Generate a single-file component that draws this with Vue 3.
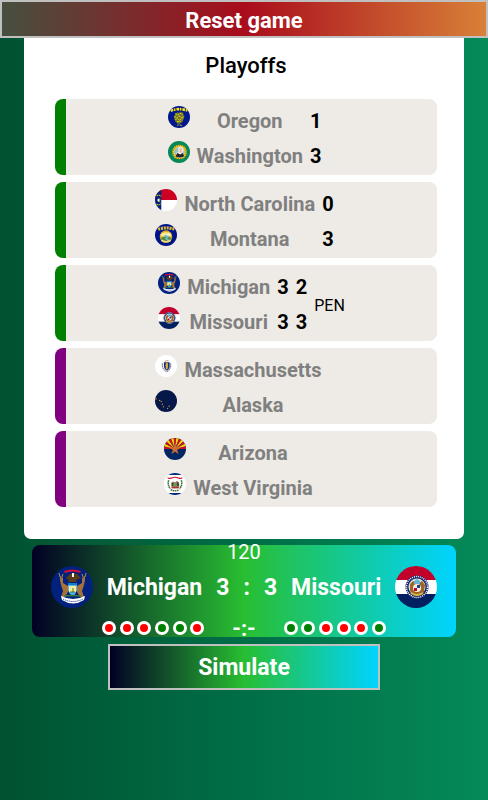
<template>
  <div class="page">
    <!-- flag drawings, used by id -->
    <svg class="flag-defs" aria-hidden="true">
      <symbol id="oregon" viewBox="0 0 42 42">
        <rect width="42" height="42" fill="#00188c" />
        <path d="M5 9 Q21 3 38 9" fill="none" stroke="#ffe600" stroke-width="5" stroke-dasharray="5 1.5 3 2" />
        <path d="M14 14l5-2 2 2 3-3 5 2 2 9-3 8-7 5-7-5-3-8z" fill="#6f7430" />
        <path d="M14 15l5 2 3-3 6 2M12 20l5 2 4-3 5 3 5-2M14 26l4-2 4 3 6-4M17 30l8-1" fill="none" stroke="#ffe600" stroke-width="1.5" stroke-dasharray="4 1" />
        <path d="M17 37h3M22 37h5M18 34l2 1M25 34l-1 1" stroke="#c9b832" stroke-width="1.5" />
      </symbol>
      <symbol id="washington" viewBox="0 0 42 42">
        <rect width="42" height="42" fill="#058757" />
        <circle cx="22" cy="21" r="14" fill="#f5c91a" />
        <circle cx="22" cy="21" r="12.5" fill="none" stroke="#2b2b12" stroke-width="1" stroke-dasharray="2 2" />
        <circle cx="22" cy="21" r="10" fill="#8fc4c9" />
        <path d="M14 29l2-6 4-2-1-8 4-3 6 3 1 6-3 4 4 7q-8 4-17-1" fill="#eee6e0" />
        <path d="M14 29l4-6 5 3 5-3 3 6q-8 5-17 0" fill="#26262c" />
        <path d="M22 14h4v8h-4z" fill="#e8b69b" />
      </symbol>
      <symbol id="carolina" viewBox="0 0 42 42">
        <rect width="42" height="21" fill="#cc0022" />
        <rect y="21" width="42" height="21" fill="#fff" />
        <rect width="12" height="42" fill="#00237b" />
        <path d="M4 21l3-3 2 3-2 4z" fill="#fff" />
        <path d="M3 13q5-3 9 1M3 29q5 3 8-1M9 18v7" stroke="#c9b532" stroke-width="2" fill="none" stroke-dasharray="3 1" />
      </symbol>
      <symbol id="montana" viewBox="0 0 42 42">
        <rect width="42" height="42" fill="#001489" />
        <path d="M6 10 Q21 5 38 10" fill="none" stroke="#d6b537" stroke-width="6" stroke-dasharray="4 1.5" />
        <circle cx="21" cy="24" r="12" fill="#d9a82d" />
        <path d="M10 20q11-9 22 0l-3 4H12z" fill="#f4e37b" />
        <path d="M12 22l5-4 4 3 5-4 5 5z" fill="#f8f1dc" />
        <path d="M11 27q10-6 20 0-3 8-10 8t-10-8" fill="#538c38" />
        <path d="M18 22l7 2-4 4 6 4" fill="none" stroke="#6bb9d9" stroke-width="3" />
        <path d="M12 31q9 6 18 0" fill="none" stroke="#f3df80" stroke-width="3" />
      </symbol>
      <symbol id="michigan" viewBox="0 0 42 42">
        <rect width="42" height="42" fill="#00217e" />
        <path d="M13 5q8-3 17 0l-1 2q-7-3-15 0z" fill="#d21034" />
        <path d="M15 12l4-4 3-1 4 1 4 4-5 2 1 2h-9l1-2z" fill="#5a3b18" />
        <path d="M21 7h2v4h-2z" fill="#fff" />
        <path d="M9 10l3 2v5l5 3 1 4-4 7h-4l2-6-2-6-1-5zM34 10l-3 2v5l-5 3-1 4 4 7h4l-2-6 2-6 1-5z" fill="#a5713b" />
        <path d="M9 11l-1-4M11 11l1-3M34 11l1-4M32 11l-1-3" stroke="#b98951" />
        <path d="M17 17h9v7q-1 4-4 6-4-2-5-6z" fill="#52b7e8" />
        <path d="M18 20h7v6h-7z" fill="#f7ec9d" />
        <path d="M19 26h5M22 22v4" stroke="#4b762c" stroke-width="1" />
        <path d="M17 18h9" stroke="#157ec4" stroke-width="2" />
        <path d="M13 30q8-1 17 0" stroke="#347b3c" stroke-width="1.5" fill="none" />
        <path d="M10 30q12 6 24 0l-1 4q-11 7-22 0z" fill="#fff" />
        <path d="M12 33q10 5 20 0" stroke="#00217e" fill="none" stroke-dasharray="1 1" />
      </symbol>
      <symbol id="missouri" viewBox="0 0 42 42">
        <rect width="42" height="14" fill="#c1002b" />
        <rect y="14" width="42" height="14" fill="#fff" />
        <rect y="28" width="42" height="14" fill="#00205f" />
        <circle cx="22" cy="21" r="11.5" fill="#10246b" />
        <circle cx="22" cy="21" r="10.5" fill="none" stroke="#fff" stroke-width="1.5" stroke-dasharray="1 1" />
        <circle cx="22" cy="21" r="8.5" fill="#e9e2d2" />
        <path d="M15 18l3-3 3 2h3l3-2 3 4-1 7-4 3h-6l-4-4z" fill="#9c662b" />
        <path d="M19 15l3-2 3 2v3h-6z" fill="#62b5d8" />
        <circle cx="22" cy="22" r="4" fill="#f8f0dc" />
        <path d="M19 22h3v3h-3z" fill="#c1002b" />
        <path d="M22 19h3v3h-3z" fill="#1d3e91" />
        <path d="M16 27q6 4 12 0" stroke="#d9b63a" stroke-width="2" fill="none" />
      </symbol>
      <symbol id="massachusetts" viewBox="0 0 42 42">
        <rect width="42" height="42" fill="#fff" />
        <path d="M17 14h11v9q-1 5-5 7-5-2-6-7z" fill="#112f7c" />
        <path d="M21 15h3l1 4-1 8h-3l-1-7z" fill="#e2aa38" />
        <path d="M20 11h6M18 13h3" stroke="#a88643" stroke-width="1.5" />
        <path d="M14 16v7l3 5 5 4 5-3 3-6v-7" fill="none" stroke="#26355c" stroke-width="1.5" stroke-dasharray="3 1" />
      </symbol>
      <symbol id="alaska" viewBox="0 0 42 42">
        <rect width="42" height="42" fill="#06184a" />
        <g fill="#f0b323">
          <circle cx="2" cy="17" r="1.3" />
          <circle cx="9" cy="20" r="1.2" />
          <circle cx="12" cy="22" r="1.2" />
          <circle cx="14" cy="27" r="1.2" />
          <circle cx="16" cy="32" r="1.2" />
          <circle cx="24" cy="35" r="1.2" />
          <circle cx="27" cy="31" r="1.2" />
        </g>
      </symbol>
      <symbol id="arizona" viewBox="0 0 42 42">
        <rect width="42" height="42" fill="#002664" />
        <polygon v-for="(ray, i) in rays" :key="i" :points="ray" :fill="i % 2 ? '#fed700' : '#c8102e'" />
        <path d="M21 11l3 7h8l-7 5 3 8-7-5-7 5 3-8-7-5h8z" fill="#ce6c32" />
      </symbol>
      <symbol id="virginia" viewBox="0 0 42 42">
        <rect width="42" height="42" fill="#fff" />
        <path d="M0 0h42v4H0zM0 38h42v4H0z" fill="#002b7f" />
        <path d="M7 9q3 3 7 0M28 9q4 3 7 0M14 10q7-4 14 0" fill="none" stroke="#c8102e" stroke-width="2" />
        <path d="M9 14q-3 8 3 16M33 14q3 8-3 16" fill="none" stroke="#3a7a35" stroke-width="3" stroke-dasharray="3 1" />
        <path d="M13 32q8 4 16 0" fill="none" stroke="#4a7030" stroke-width="3" stroke-dasharray="3 1" />
        <path d="M14 18l4-2 3 2 4-3 4 4v8l-4 2h-8l-3-3z" fill="#90785b" />
        <path d="M15 19h3v6h-3zM25 18h3v7h-3z" fill="#423c38" />
        <path d="M18 20h6v5h-6z" fill="#6da148" />
        <path d="M14 28h15" stroke="#c8102e" stroke-width="2" />
      </symbol>
    </svg>

    <button type="button" class="reset-btn">Reset game</button>

    <section class="playoffs">
      <h1>Playoffs</h1>
      <div v-for="(match, i) in matches" :key="i" class="match" :class="match.played ? 'played' : 'upcoming'">
        <table>
          <tbody>
            <tr v-for="(team, j) in match.teams" :key="team.name">
              <td class="flag-cell">
                <svg class="flag" aria-hidden="true"><use :href="'#' + team.flag" /></svg>
              </td>
              <td class="team">{{ team.name }}</td>
              <td class="score">{{ team.score }}</td>
              <td>{{ team.pen }}</td>
              <td v-if="j === 0" rowspan="2" class="pen-label">{{ match.pen ? 'PEN' : '' }}</td>
            </tr>
          </tbody>
        </table>
      </div>
    </section>

    <section class="scoreboard">
      <div class="minute">120</div>
      <div class="result">
        <svg class="flag big" aria-hidden="true"><use href="#michigan" /></svg>
        <span>Michigan</span>
        <span>3</span>
        <span>:</span>
        <span>3</span>
        <span>Missouri</span>
        <svg class="flag big" aria-hidden="true"><use href="#missouri" /></svg>
      </div>
      <div class="penalties">
        <div class="shots">
          <span v-for="(goal, i) in homeShots" :key="i" class="shot" :class="{ goal }"></span>
        </div>
        <span>-:-</span>
        <div class="shots">
          <span v-for="(goal, i) in awayShots" :key="i" class="shot" :class="{ goal }"></span>
        </div>
      </div>
    </section>

    <button type="button" class="simulate-btn">Simulate</button>
  </div>
</template>

<script setup>
import { ref } from 'vue'

const matches = ref([
  {
    played: true,
    teams: [
      { name: 'Oregon', flag: 'oregon', score: 1 },
      { name: 'Washington', flag: 'washington', score: 3 }
    ]
  },
  {
    played: true,
    teams: [
      { name: 'North Carolina', flag: 'carolina', score: 0 },
      { name: 'Montana', flag: 'montana', score: 3 }
    ]
  },
  {
    played: true,
    pen: true,
    teams: [
      { name: 'Michigan', flag: 'michigan', score: 3, pen: 2 },
      { name: 'Missouri', flag: 'missouri', score: 3, pen: 3 }
    ]
  },
  {
    played: false,
    teams: [
      { name: 'Massachusetts', flag: 'massachusetts' },
      { name: 'Alaska', flag: 'alaska' }
    ]
  },
  {
    played: false,
    teams: [
      { name: 'Arizona', flag: 'arizona' },
      { name: 'West Virginia', flag: 'virginia' }
    ]
  }
])

const homeShots = ref([false, false, false, true, true, false])
const awayShots = ref([true, true, false, false, false, true])

// 13 sun rays over the upper half of the Arizona flag
const rays = Array.from({ length: 13 }, (_, i) => {
  const point = (n) => {
    const angle = Math.PI + (Math.PI * n) / 13
    return `${21 + 40 * Math.cos(angle)},${21 + 40 * Math.sin(angle)}`
  }
  return `21,21 ${point(i)} ${point(i + 1)}`
})
</script>

<style>
body {
  margin: 0;
}
</style>

<style scoped>
.page {
  min-height: 100vh;
  display: flex;
  flex-direction: column;
  align-items: center;
  font-family: Roboto, "Liberation Sans", sans-serif;
  background: linear-gradient(90deg, #005230 0%, #006e47 50%, #058a58 100%);
}

.flag-defs {
  position: absolute;
  width: 0;
  height: 0;
}

button {
  box-sizing: border-box;
  padding: 0;
  border: 2px solid #c0c0c0;
  color: white;
  font-family: inherit;
  font-weight: bold;
  cursor: pointer;
}

.reset-btn {
  width: 100%;
  height: 38px;
  padding-top: 2px;
  font-size: 22px;
  background: linear-gradient(90deg, #45503f 0%, #a90c1c 50%, #d88038 100%);
}

.playoffs {
  box-sizing: border-box;
  width: 90%;
  padding: 12px 27px 32px 31px;
  background: white;
  border-radius: 0 0 7px 7px;
}

h1 {
  margin: 0 0 17px;
  font-size: 22px;
  line-height: 32px;
  font-weight: 500;
  text-align: center;
}

.match {
  padding: 5px 0 1px;
  border-left: 11px solid green;
  border-radius: 8px;
  background: #eeebe6;
}

.match + .match {
  margin-top: 7px;
}

.match.upcoming {
  border-left-color: purple;
}

table {
  margin: 0 auto;
  border-spacing: 7px 0;
  font-size: 20px;
  line-height: 35px;
  font-weight: bold;
}

td {
  height: 35px;
  padding: 0;
}

.flag-cell {
  vertical-align: top;
}

.flag {
  display: block;
  width: 22px;
  height: 22px;
  margin-top: 2px;
  border-radius: 50%;
  overflow: hidden;
}

.team {
  color: gray;
  text-align: center;
}

.score {
  min-width: 5px;
}

.pen-label {
  font-size: 16px;
  font-weight: normal;
}

.scoreboard {
  width: 87%;
  margin-top: 6px;
  border-radius: 8px;
  color: white;
  background: linear-gradient(90deg, #020024 0%, #28be32 50%, #00d4ff 100%);
}

.minute {
  font-size: 20px;
  line-height: 14px;
  text-align: center;
}

.result {
  display: flex;
  justify-content: center;
  align-items: center;
  gap: 14px;
  height: 56px;
  font-size: 23px;
  font-weight: bold;
}

.flag.big {
  width: 42px;
  height: 42px;
  margin-top: 0;
}

.penalties {
  display: flex;
  justify-content: center;
  align-items: center;
  gap: 28px;
  height: 22px;
  padding-top: 4px;
  box-sizing: border-box;
  font-size: 22px;
  font-weight: bold;
}

.shots {
  display: flex;
  justify-content: space-between;
  width: 102px;
}

.shot {
  box-sizing: border-box;
  width: 14px;
  height: 14px;
  border: 3px solid white;
  border-radius: 50%;
  background: red;
}

.shot.goal {
  background: green;
}

.simulate-btn {
  width: 272px;
  max-width: 100%;
  height: 46px;
  margin-top: 7px;
  font-size: 23px;
  background: linear-gradient(90deg, #020024 0%, #28be32 50%, #00d4ff 100%);
}
</style>
